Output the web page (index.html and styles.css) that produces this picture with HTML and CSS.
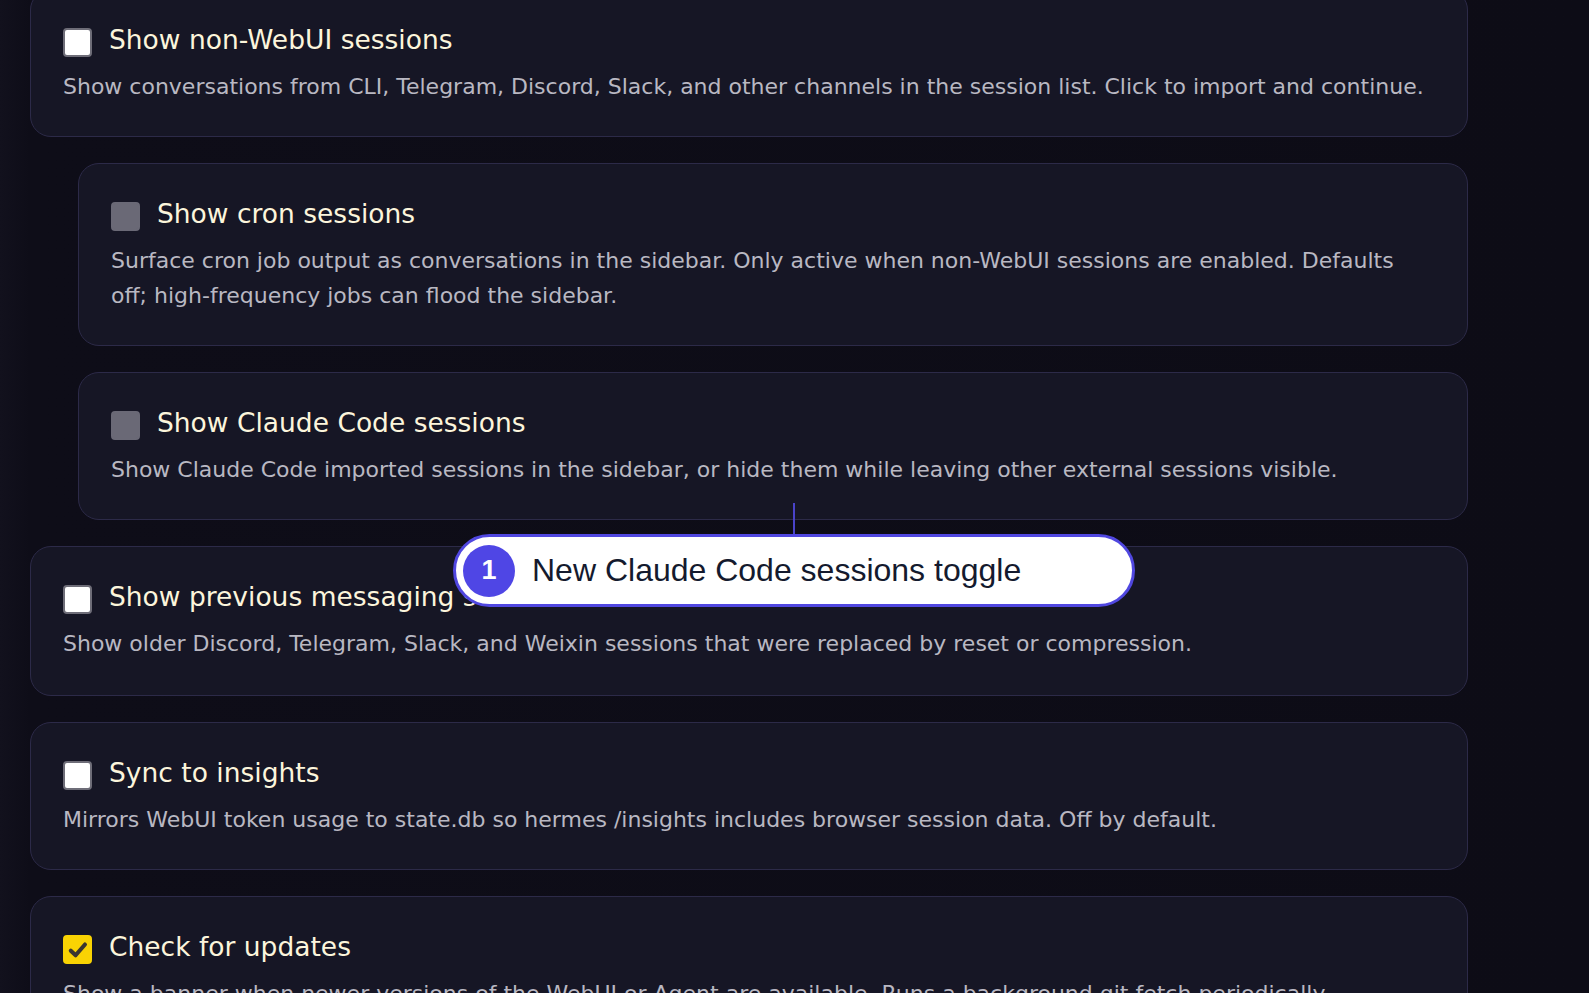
FILE: index.html
```html
<!DOCTYPE html>
<html lang="en">
<head>
<meta charset="utf-8">
<title>Settings</title>
<link rel="stylesheet" href="styles.css">
</head>
<body>
<main class="list">
  <section class="card">
    <label class="row"><span class="box"></span><span class="title">Show non-WebUI sessions</span></label>
    <p class="desc">Show conversations from CLI, Telegram, Discord, Slack, and other channels in the session list. Click to import and continue.</p>
  </section>
  <section class="card sub">
    <label class="row"><span class="box disabled"></span><span class="title">Show cron sessions</span></label>
    <p class="desc">Surface cron job output as conversations in the sidebar. Only active when non-WebUI sessions are enabled. Defaults off; high-frequency jobs can flood the sidebar.</p>
  </section>
  <section class="card sub target">
    <label class="row"><span class="box disabled"></span><span class="title">Show Claude Code sessions</span></label>
    <p class="desc">Show Claude Code imported sessions in the sidebar, or hide them while leaving other external sessions visible.</p>
    <div class="callout">
      <span class="stem"></span>
      <div class="pill"><span class="badge">1</span><span class="pill-text">New Claude Code sessions toggle</span></div>
    </div>
  </section>
  <section class="card tall">
    <label class="row"><span class="box"></span><span class="title">Show previous messaging sessions</span></label>
    <p class="desc">Show older Discord, Telegram, Slack, and Weixin sessions that were replaced by reset or compression.</p>
  </section>
  <section class="card">
    <label class="row"><span class="box"></span><span class="title">Sync to insights</span></label>
    <p class="desc">Mirrors WebUI token usage to state.db so hermes /insights includes browser session data. Off by default.</p>
  </section>
  <section class="card">
    <label class="row"><span class="box checked"><svg viewBox="0 0 20 20" width="24" height="24"><path d="M4 10.6 L8 14.4 L15.8 5.4" fill="none" stroke="#3a3630" stroke-width="3.4" stroke-linecap="round" stroke-linejoin="round"/></svg></span><span class="title">Check for updates</span></label>
    <p class="desc">Show a banner when newer versions of the WebUI or Agent are available. Runs a background git fetch periodically.</p>
  </section>
</main>
</body>
</html>
```
FILE: styles.css
```css
html, body {
  margin: 0;
  padding: 0;
  background: #0d0c16;
  overflow: hidden;
  height: 100%;
}
body {
  font-family: "DejaVu Sans", sans-serif;
  background: linear-gradient(90deg, #12111d 0, #0e0d18 30px, #0d0c16 100%);
}
.list {
  width: 1438px;
  margin: -11px 0 0 30px;
  display: flex;
  flex-direction: column;
  gap: 26px;
}
.card {
  position: relative;
  box-sizing: border-box;
  background: #161625;
  border: 1px solid #2c2a48;
  border-radius: 21px;
  padding: 32px 32px 32px 32px;
}
.card.sub {
  margin-left: 48px;
}
.card.tall {
  padding-bottom: 34px;
}
.row {
  display: flex;
  align-items: center;
  gap: 17px;
  height: 35px;
}
.box {
  width: 29px;
  height: 29px;
  box-sizing: border-box;
  border-radius: 4px;
  border: 2px solid #6e6d78;
  background: #ffffff;
  flex: none;
  margin-top: 6px;
  display: flex;
  align-items: center;
  justify-content: center;
}
.box.disabled {
  background: #6a6976;
  border-color: #6a6976;
}
.box.checked {
  background: #f9d303;
  border-color: #f9d303;
}
.title {
  color: #fcf5dc;
  font-size: 26.5px;
  line-height: 35px;
}
.desc {
  margin: 12px 0 0 0;
  color: #b9b8c2;
  font-size: 22px;
  line-height: 35px;
}
.callout {
  position: absolute;
  left: 374px;
  top: 130px;
  width: 682px;
  display: flex;
  flex-direction: column;
  align-items: center;
  z-index: 2;
}
.stem {
  width: 2px;
  height: 31px;
  background: #4a43c9;
}
.pill {
  box-sizing: border-box;
  width: 682px;
  height: 73px;
  background: #ffffff;
  border: 3px solid #5047e0;
  border-radius: 37px;
  display: flex;
  align-items: center;
  gap: 17px;
  padding-left: 7px;
}
.badge {
  width: 52px;
  height: 52px;
  flex: none;
  border-radius: 50%;
  background: #4f46e5;
  color: #ffffff;
  font-family: "Liberation Sans", Arial, sans-serif;
  font-weight: bold;
  font-size: 27px;
  display: flex;
  align-items: center;
  justify-content: center;
}
.pill-text {
  font-family: "Liberation Sans", Arial, sans-serif;
  font-size: 32px;
  color: #141a2e;
}
```
